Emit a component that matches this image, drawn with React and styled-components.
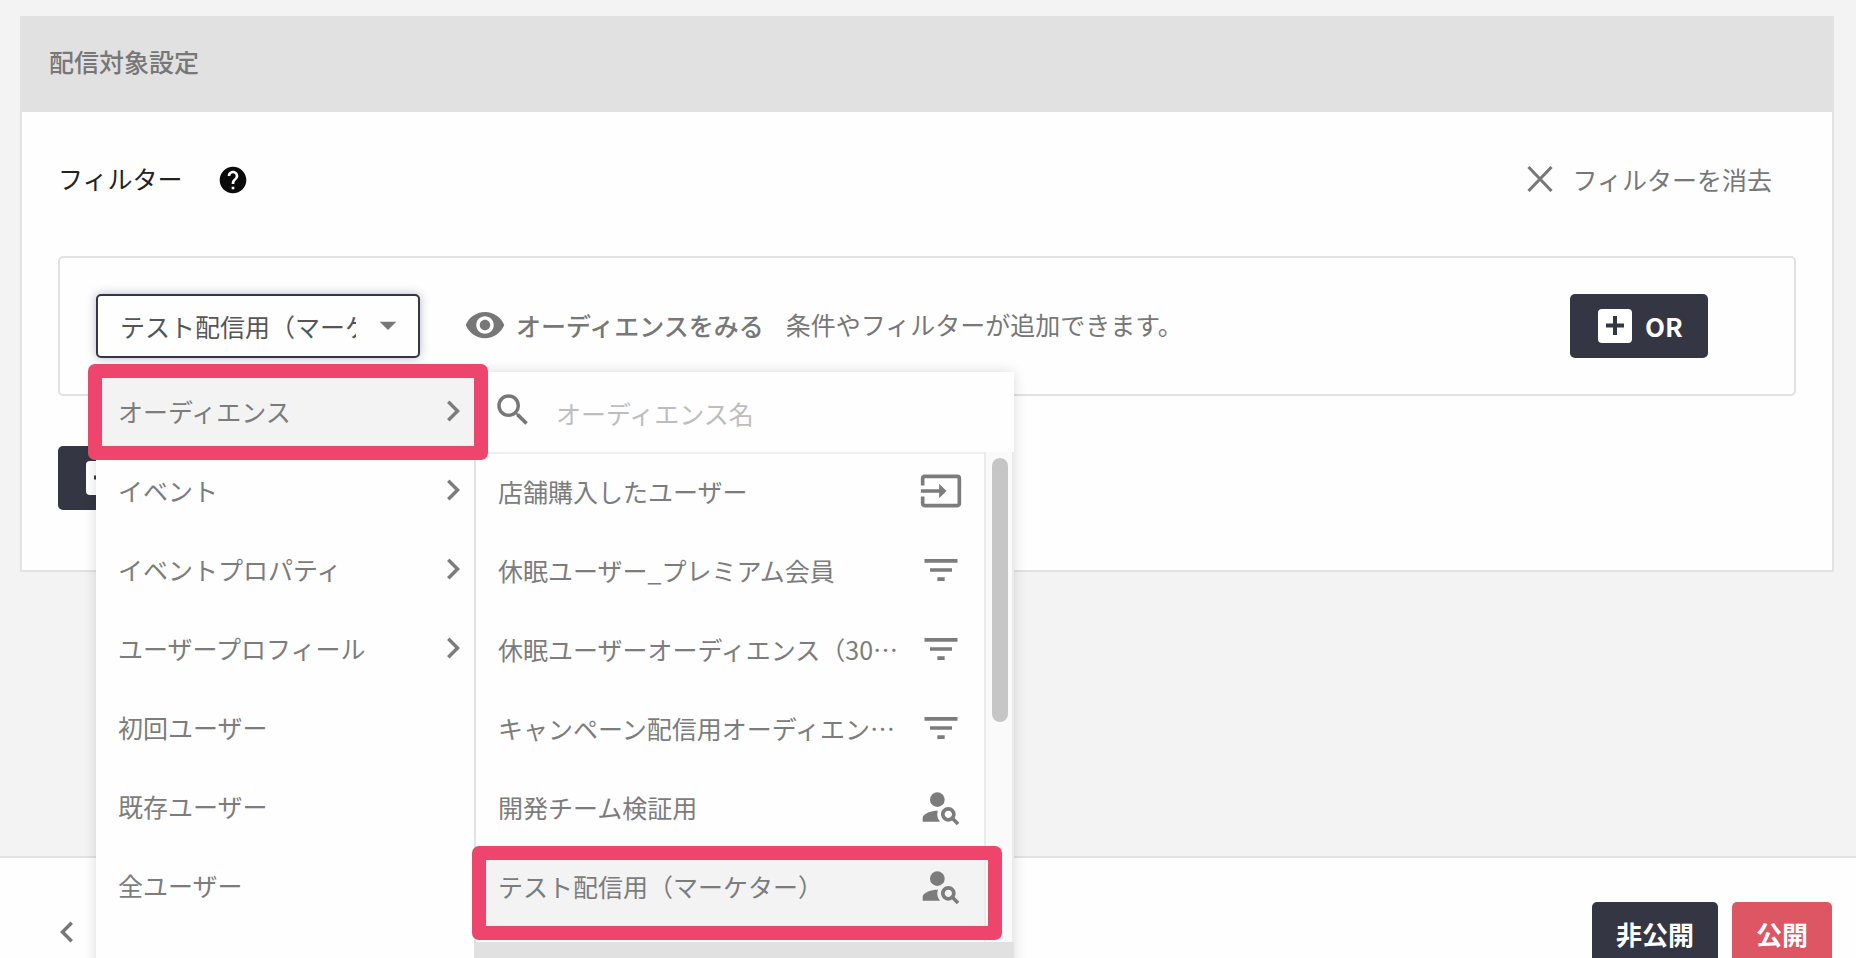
import styled, { createGlobalStyle, css } from "styled-components";
import {
    MdArrowDropDown,
    MdChevronLeft,
    MdChevronRight,
    MdFilterList,
    MdHelp,
    MdInput,
    MdPersonSearch,
    MdRemoveRedEye,
    MdSearch,
} from "react-icons/md";

const GlobalStyle = createGlobalStyle`
    * {
        box-sizing: border-box;
    }
    body {
        margin: 0;
        background: #f3f3f3;
    }
    body, button, input, select {
        font-family: "Noto Sans CJK JP", "Noto Sans", sans-serif;
        font-size: 25px;
        line-height: 36px;
    }
    button {
        cursor: pointer;
    }
    svg {
        display: block;
        flex-shrink: 0;
    }
`

const Page = styled.div`
    height: 100vh;
    display: flex;
    flex-direction: column;
    overflow: hidden;
    color: #777;
`

const Main = styled.main`
    flex: 1;
    padding: 16px 22px 0 20px;
`

const Card = styled.section`
    border: 2px solid #e2e2e2;
    border-top: none;
    background: #fefefe;
`

const CardHeader = styled.h2`
    margin: 0;
    padding: 27px 27px 33px;
    background: #e1e1e1;
    font-size: 25px;
    line-height: 36px;
    font-weight: 500;
`

const CardBody = styled.div`
    padding: 48px 36px 60px;
`

const FilterHead = styled.div`
    display: flex;
    align-items: center;
    height: 40px;
    padding-right: 24px;
`

const FilterTitle = styled.h3`
    margin: 0 34px 0 0;
    padding-bottom: 4px;
    font-size: 25px;
    font-weight: 400;
    color: #222;
`

const TextButton = styled.button`
    display: flex;
    align-items: center;
    gap: ${(props) => props.$gap};
    padding: 0 0 2px;
    border: none;
    background: none;
    color: #777;
    font-weight: ${(props) => (props.$strong ? 500 : 400)};
`

const ClearButton = styled(TextButton)`
    margin-left: auto;
`

const FilterBox = styled.div`
    display: flex;
    align-items: center;
    margin: 56px 0 50px;
    padding: 36px 86px 36px 36px;
    border: 2px solid #e2e2e2;
    border-radius: 5px;
`

const SelectWrap = styled.div`
    position: relative;
    width: 324px;
    margin-right: 44px;
    & > svg {
        position: absolute;
        top: 11px;
        right: 12px;
        pointer-events: none;
    }
`

const TargetSelect = styled.select`
    display: block;
    width: 100%;
    height: 64px;
    padding: 0 62px 0 22px;
    appearance: none;
    border: 2px solid #343643;
    border-radius: 5px;
    outline: none;
    background: #fefefe;
    box-shadow: 0 0 10px rgba(52, 54, 110, 0.35);
    color: #555;
`

const Hint = styled.span`
    margin-left: 22px;
    padding-bottom: 4px;
`

const Button = styled.button`
    height: 64px;
    padding: 0 24px;
    border: none;
    border-radius: 5px;
    background: ${(props) => (props.$primary ? "#dc5664" : "#343643")};
    color: #fff;
    font-size: 26px;
    font-weight: 700;
`

const AddButton = styled(Button)`
    display: flex;
    align-items: center;
    gap: 13px;
    min-width: 138px;
    padding: 0 24px 0 28px;
`

const OrButton = styled(AddButton)`
    margin-left: auto;
`

const Menu = styled.div`
    position: absolute;
    top: 78px;
    left: 0;
    z-index: 1;
    display: grid;
    grid-template-columns: 378px 540px;
    height: 620px;
    background: #fefefe;
    box-shadow: 0 0 12px rgba(0, 0, 0, 0.14);
`

const MenuList = styled.ul`
    margin: 0;
    padding: 0;
    list-style: none;
`

const rowStyle = css`
    display: flex;
    align-items: center;
    justify-content: space-between;
    width: 100%;
    height: 79px;
    border: none;
    background: ${(props) => (props.$active ? "#f3f3f3" : "transparent")};
    color: #7c7c7c;
    text-align: left;
    white-space: nowrap;
`

const CategoryRow = styled.button`
    ${rowStyle}
    padding: 0 0 2px 22px;
`

const AudiencePanel = styled.div`
    display: flex;
    flex-direction: column;
    border-left: 2px solid #e2e2e2;
`

const SearchRow = styled.label`
    display: flex;
    align-items: center;
    gap: 22px;
    height: 82px;
    padding: 0 16px 4px;
    border-bottom: 2px solid #efefef;
`

const SearchInput = styled.input`
    flex: 1;
    min-width: 0;
    height: 60px;
    padding: 6px 0 0;
    border: none;
    outline: none;
    background: none;
    &::placeholder {
        color: #bdbdbd;
    }
`

const AudienceScroll = styled.div`
    display: grid;
    grid-template-columns: 1fr 30px;
    height: 490px;
    margin-top: -2px;
`

const AudienceRow = styled.button`
    ${rowStyle}
    padding: 0 21px 2px 22px;
`

const ScrollTrack = styled.div`
    padding: 6px 4px 0 6px;
    border: solid #ebebeb;
    border-width: 0 2px;
    background: #fafafa;
`

const ScrollThumb = styled.div`
    height: 264px;
    border-radius: 8px;
    background: #c6c6c6;
`

const PanelFooter = styled.div`
    flex: 1;
    margin-left: -2px;
    background: #e1e1e1;
`

const Highlight = styled.div`
    position: absolute;
    top: ${(props) => props.$top};
    left: ${(props) => props.$left};
    width: ${(props) => props.$width};
    height: ${(props) => props.$height};
    border: 14px solid #ed456c;
    border-radius: 7px;
    pointer-events: none;
`

const Footer = styled.footer`
    display: flex;
    align-items: flex-start;
    flex: 0 0 102px;
    gap: 14px;
    padding: 44px 24px 0 46px;
    overflow: hidden;
    border-top: 2px solid #e2e2e2;
    background: #fefefe;
`

const BackButton = styled.button`
    display: flex;
    align-items: center;
    height: 60px;
    margin-right: auto;
    padding: 0;
    border: none;
    background: none;
    color: #777;
`

const categories = [
    { name: "オーディエンス", nested: true },
    { name: "イベント", nested: true },
    { name: "イベントプロパティ", nested: true },
    { name: "ユーザープロフィール", nested: true },
    { name: "初回ユーザー" },
    { name: "既存ユーザー" },
    { name: "全ユーザー" },
]

const audiences = [
    { name: "店舗購入したユーザー", icon: MdInput },
    { name: "休眠ユーザー_プレミアム会員", icon: MdFilterList },
    { name: "休眠ユーザーオーディエンス（30…", icon: MdFilterList },
    { name: "キャンペーン配信用オーディエン…", icon: MdFilterList },
    { name: "開発チーム検証用", icon: MdPersonSearch },
    { name: "テスト配信用（マーケター）", icon: MdPersonSearch },
]

function CloseIcon() {
    return (
        <svg width="26" height="26" viewBox="0 0 26 26" fill="none" stroke="currentColor" strokeWidth="3">
            <path d="M1.5 1l23 24M24.5 1l-23 24" />
        </svg>
    );
}

function PlusBoxIcon() {
    return (
        <svg width="34" height="34" viewBox="0 0 34 34">
            <rect x="0" y="0" width="34" height="34" rx="4" fill="#fff" />
            <path d="M8 16.5h18M17 7v19" stroke="#343643" strokeWidth="4" />
        </svg>
    );
}

function TargetMenu() {
    return (
        <Menu>
            <MenuList>
                {categories.map((item, index) => (
                    <li key={item.name}>
                        <CategoryRow type="button" $active={index === 0}>
                            {item.name}
                            {item.nested && <MdChevronRight size={42} />}
                        </CategoryRow>
                    </li>
                ))}
            </MenuList>
            <AudiencePanel>
                <SearchRow>
                    <MdSearch size={42} />
                    <SearchInput type="text" placeholder="オーディエンス名" aria-label="オーディエンス名" />
                </SearchRow>
                <AudienceScroll>
                    <MenuList>
                        {audiences.map(({ name, icon: Icon }, index) => (
                            <li key={name}>
                                <AudienceRow type="button" $active={index === 5}>
                                    {name}
                                    <Icon size={44} />
                                </AudienceRow>
                            </li>
                        ))}
                    </MenuList>
                    <ScrollTrack>
                        <ScrollThumb />
                    </ScrollTrack>
                </AudienceScroll>
                <PanelFooter />
            </AudiencePanel>
            <Highlight $top="-8px" $left="-8px" $width="400px" $height="96px" />
            <Highlight $top="474px" $left="376px" $width="530px" $height="94px" />
        </Menu>
    );
}

function App() {
    return (
        <Page>
            <GlobalStyle />
            <Main>
                <Card>
                    <CardHeader>配信対象設定</CardHeader>
                    <CardBody>
                        <FilterHead>
                            <FilterTitle>フィルター</FilterTitle>
                            <MdHelp size={32} color="#0a0a0a" />
                            <ClearButton type="button" $gap="19px">
                                <CloseIcon />
                                フィルターを消去
                            </ClearButton>
                        </FilterHead>
                        <FilterBox>
                            <SelectWrap>
                                <TargetSelect aria-label="配信対象">
                                    <option>テスト配信用（マーケター）</option>
                                </TargetSelect>
                                <MdArrowDropDown size={40} />
                                <TargetMenu />
                            </SelectWrap>
                            <TextButton type="button" $gap="10px" $strong>
                                <MdRemoveRedEye size={42} />
                                オーディエンスをみる
                            </TextButton>
                            <Hint>条件やフィルターが追加できます。</Hint>
                            <OrButton type="button">
                                <PlusBoxIcon />
                                OR
                            </OrButton>
                        </FilterBox>
                        <AddButton type="button" aria-label="条件を追加">
                            <PlusBoxIcon />
                        </AddButton>
                    </CardBody>
                </Card>
            </Main>
            <Footer>
                <BackButton type="button" aria-label="戻る">
                    <MdChevronLeft size={42} />
                </BackButton>
                <Button type="button">非公開</Button>
                <Button type="button" $primary>公開</Button>
            </Footer>
        </Page>
    );
}

export default App;
